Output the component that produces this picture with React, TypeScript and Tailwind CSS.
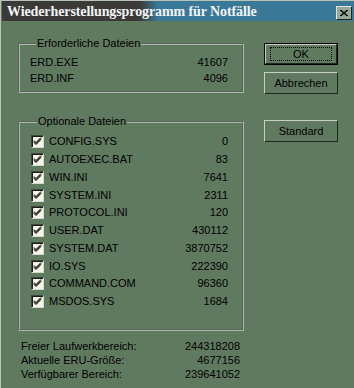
import React from "react";

const required = [
  { name: "ERD.EXE", size: "41607" },
  { name: "ERD.INF", size: "4096" },
];

const optional = [
  { name: "CONFIG.SYS", size: "0" },
  { name: "AUTOEXEC.BAT", size: "83" },
  { name: "WIN.INI", size: "7641" },
  { name: "SYSTEM.INI", size: "2311" },
  { name: "PROTOCOL.INI", size: "120" },
  { name: "USER.DAT", size: "430112" },
  { name: "SYSTEM.DAT", size: "3870752" },
  { name: "IO.SYS", size: "222390" },
  { name: "COMMAND.COM", size: "96360" },
  { name: "MSDOS.SYS", size: "1684" },
];

const stats = [
  { label: "Freier Laufwerkbereich:", value: "244318208" },
  { label: "Aktuelle ERU-Größe:", value: "4677156" },
  { label: "Verfügbarer Bereich:", value: "239641052" },
];

function Check() {
  return (
    <div className="flex h-[13px] w-[13px] shrink-0 items-center justify-center border border-t-[#3c463c] border-l-[#3c463c] border-r-[#d0dad0] border-b-[#d0dad0] bg-[#f4f4e8] shadow-[inset_1px_1px_0_#1a1f1a]">
      <svg width="9" height="9" viewBox="0 0 9 9" className="block">
        <path d="M1 3.5 L3 5.5 L8 0.5 M1 4.5 L3 6.5 L8 1.5 M1 5.5 L3 7.5 L8 2.5" stroke="#000" strokeWidth="1" fill="none" />
      </svg>
    </div>
  );
}

function Btn({ label, def }: { label: string; def?: boolean }) {
  return (
    <button
      className={`h-[22px] w-[74px] bg-[#607a60] text-[11px] text-black ${
        def ? "border border-black" : ""
      }`}
    >
      <span className="flex h-full w-full items-center justify-center border-t border-l border-t-[#c4d0c4] border-l-[#c4d0c4] border-r border-b border-r-[#1e261e] border-b-[#1e261e]">
        {def ? (
          <span className="flex h-[14px] w-[62px] items-center justify-center border border-dotted border-black">
            {label}
          </span>
        ) : (
          label
        )}
      </span>
    </button>
  );
}

export default function App() {
  return (
    <div className="h-[388px] w-[354px] overflow-hidden border-t border-l border-[#b8c4b8] bg-[#607a60] font-['Liberation_Sans',Arial,sans-serif] text-[11px] leading-[13px] text-black">
      {/* Titelleiste: links dunkel, rechts blau */}
      <div className="ml-px flex h-[20px] items-center justify-between bg-[#3a7898] bg-[image:linear-gradient(to_right,#3b3a38_138px,#3a7898_156px)] pl-[5px] pr-[2px]">
        <span className="font-['Liberation_Serif','DejaVu_Serif',serif] text-[14px] font-bold tracking-[-0.1px] text-[#f4f4f4]">
          Wiederherstellungsprogramm für Notfälle
        </span>
        <span className="mt-[4px] flex h-[14px] w-[16px] items-center justify-center border-t border-l border-t-[#dfe6df] border-l-[#dfe6df] border-r border-b border-r-[#1e261e] border-b-[#1e261e] bg-[#97a897]">
          <svg width="8" height="7" viewBox="0 0 8 7">
            <path d="M0 0 L7 6 M1 0 L8 6 M7 0 L0 6 M8 0 L1 6" stroke="#000" strokeWidth="1" fill="none" />
          </svg>
        </span>
      </div>

      <div className="flex pl-[17px] pt-[16px]">
        <div className="w-[226px]">
          <fieldset className="border-2 border-[#a9b9a9] px-[10px] pt-[4px] pb-[5px] [border-style:groove]">
            <legend className="ml-[6px] px-[1px]">Erforderliche Dateien</legend>
            {required.map((f) => (
              <div key={f.name} className="flex h-[16px] items-center justify-between pr-[4px]">
                <span>{f.name}</span>
                <span>{f.size}</span>
              </div>
            ))}
          </fieldset>

          <fieldset className="mt-[22px] border-2 border-[#a9b9a9] pl-[11px] pr-[14px] pt-[5px] pb-[18px] [border-style:groove]">
            <legend className="ml-[6px] px-[1px]">Optionale Dateien</legend>
            {optional.map((f) => (
              <div key={f.name} className="flex h-[17.75px] items-center">
                <Check />
                <span className="ml-[5px] flex-1">{f.name}</span>
                <span>{f.size}</span>
              </div>
            ))}
          </fieldset>

          <div className="mt-[9px] pl-[3px] pr-[4px]">
            {stats.map((s) => (
              <div key={s.label} className="flex h-[14.2px] items-center justify-between">
                <span>{s.label}</span>
                <span>{s.value}</span>
              </div>
            ))}
          </div>
        </div>

        <div className="ml-[20px] flex flex-col pt-[6px]">
          <Btn label="OK" def />
          <div className="mt-[7px]">
            <Btn label="Abbrechen" />
          </div>
          <div className="mt-[26px]">
            <Btn label="Standard" />
          </div>
        </div>
      </div>
    </div>
  );
}
